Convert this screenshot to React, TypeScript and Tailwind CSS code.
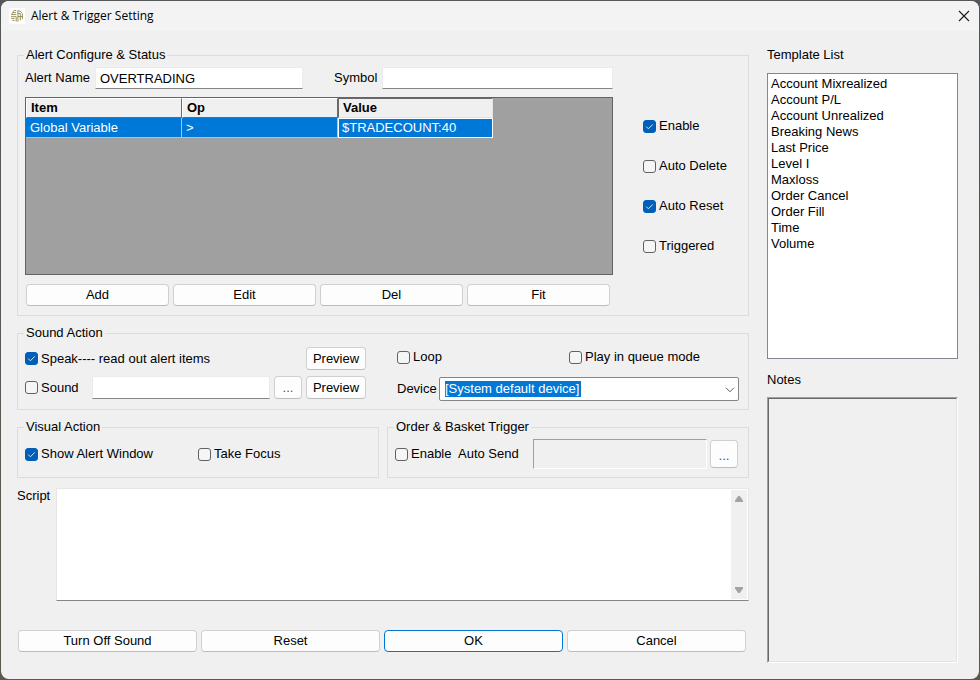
import { useState } from 'react';
import type { ReactNode } from 'react';
import clsx from 'clsx';

type AlertRow = { item: string; op: string; value: string };

const TEMPLATES = [
  'Account Mixrealized',
  'Account P/L',
  'Account Unrealized',
  'Breaking News',
  'Last Price',
  'Level I',
  'Maxloss',
  'Order Cancel',
  'Order Fill',
  'Time',
  'Volume'
];

const ROWS: AlertRow[] = [{ item: 'Global Variable', op: '>', value: '$TRADECOUNT:40' }];

const FIELD_CLASS = 'min-w-0 border border-[#ebebeb] border-b-[#868686] bg-white px-1 outline-none';

export default function App() {
  const [alertName, setAlertName] = useState('OVERTRADING');
  const [symbol, setSymbol] = useState('');

  return (
    <div className="flex min-h-screen bg-linear-to-b from-[#55565a] to-[#5a5a4c] p-px font-['Liberation_Sans',Arial,sans-serif] text-[13px] leading-4 text-black">
      <div className="flex flex-1 flex-col overflow-hidden rounded-lg bg-[#f0f0f0]">
        <TitleBar />

        <div className="flex flex-1 gap-[18px] pt-4 pr-[21px] pb-4 pl-4">
          <main className="min-w-0 flex-1">
            <GroupBox title="Alert Configure & Status" className="flex pb-[9px]">
              <div className="min-w-0 flex-1 pt-1">
                <div className="flex h-[22px] items-center">
                  <label htmlFor="alert-name" className="w-[70px]">
                    Alert Name
                  </label>
                  <input
                    id="alert-name"
                    value={alertName}
                    onChange={(event) => setAlertName(event.target.value)}
                    className={clsx(FIELD_CLASS, 'h-[22px] w-52')}
                  />
                  <label htmlFor="symbol" className="ml-[31px] w-12">
                    Symbol
                  </label>
                  <input
                    id="symbol"
                    value={symbol}
                    onChange={(event) => setSymbol(event.target.value)}
                    className={clsx(FIELD_CLASS, 'h-[22px] flex-1')}
                  />
                </div>

                <AlertGrid rows={ROWS} />

                <div className="mt-[9px] flex gap-1 pr-[3px] pl-px">
                  <PushButton className="h-[22px] flex-1">Add</PushButton>
                  <PushButton className="h-[22px] flex-1">Edit</PushButton>
                  <PushButton className="h-[22px] flex-1">Del</PushButton>
                  <PushButton className="h-[22px] flex-1">Fit</PushButton>
                </div>
              </div>

              <div className="flex w-[135px] flex-col gap-6 pt-[55px] pl-[30px]">
                <CheckBox label="Enable" defaultChecked />
                <CheckBox label="Auto Delete" />
                <CheckBox label="Auto Reset" defaultChecked />
                <CheckBox label="Triggered" />
              </div>
            </GroupBox>

            <GroupBox title="Sound Action" className="mt-[9px] flex pt-1.5 pr-[9px] pb-2">
              <div className="flex w-[372px] flex-col gap-1.5 pr-[31px]">
                <div className="flex h-[23px] items-center justify-between">
                  <CheckBox label="Speak---- read out alert items" defaultChecked />
                  <PushButton className="h-[23px] w-[60px]">Preview</PushButton>
                </div>
                <div className="flex h-[23px] items-center gap-1">
                  <CheckBox label="Sound" className="w-[63px]" />
                  <input aria-label="Sound file" className={clsx(FIELD_CLASS, 'h-[23px] flex-1')} />
                  <PushButton className="h-[23px] w-7 text-[#3a5f80]">...</PushButton>
                  <PushButton className="h-[23px] w-[60px]">Preview</PushButton>
                </div>
              </div>

              <div className="flex flex-1 flex-col gap-2.5">
                <div className="flex h-5 items-center">
                  <CheckBox label="Loop" className="w-[172px]" />
                  <CheckBox label="Play in queue mode" />
                </div>
                <div className="flex items-center">
                  <label htmlFor="device" className="w-[42px]">
                    Device
                  </label>
                  <div className="relative flex-1">
                    {/* the current entry is painted as selected text */}
                    <select
                      id="device"
                      className="block h-6 w-full appearance-none rounded-xs border border-[#868686] bg-white bg-[linear-gradient(#0078d7,#0078d7)] bg-[length:136px_16px] bg-[position:5px_3px] bg-no-repeat px-[5px] pb-px text-white outline-none"
                    >
                      <option>[System default device]</option>
                    </select>
                    <svg
                      viewBox="0 0 10 6"
                      className="pointer-events-none absolute top-2.5 right-1 h-1.5 w-2.5"
                      fill="none"
                      stroke="#5f5f5f"
                    >
                      <path d="M1 .8 5 4.8 9 .8" />
                    </svg>
                  </div>
                </div>
              </div>
            </GroupBox>

            <div className="mt-[9px] grid grid-cols-2 gap-2">
              <GroupBox title="Visual Action" className="pt-1 pb-2">
                <div className="flex h-[30px] items-center">
                  <CheckBox label="Show Alert Window" className="w-[173px]" defaultChecked />
                  <CheckBox label="Take Focus" />
                </div>
              </GroupBox>

              <GroupBox title="Order & Basket Trigger" className="pt-1 pr-2.5 pb-2">
                <div className="flex h-[30px] items-center">
                  <CheckBox label="Enable  Auto Send" className="w-[138px]" />
                  <input
                    aria-label="Order or basket"
                    readOnly
                    className="h-[30px] min-w-0 flex-1 border border-t-[#a0a0a0] border-r-white border-b-white border-l-[#a0a0a0] px-1 outline-none"
                  />
                  <PushButton className="ml-[3px] h-7 w-7 pt-1 text-[#0067b8]">...</PushButton>
                </div>
              </GroupBox>
            </div>

            <div className="mt-2.5 flex">
              <label htmlFor="script" className="w-[39px]">
                Script
              </label>
              <div className="flex h-[113px] flex-1 border border-[#e6e6e6] border-b-[#868686] bg-white pr-px">
                <textarea id="script" className="min-w-0 flex-1 resize-none px-1 outline-none" />
                <div className="my-px flex w-4 flex-col items-center justify-between bg-[#f0f0f0] py-1.5">
                  <svg viewBox="0 0 8 6" className="h-1.5 w-2" fill="#a3a3a3">
                    <path d="M3.2 0h1.6L8 4.6V6H0V4.6z" />
                  </svg>
                  <svg viewBox="0 0 8 6" className="h-1.5 w-2" fill="#a3a3a3">
                    <path d="M0 0h8v1.4L4.8 6H3.2L0 1.4z" />
                  </svg>
                </div>
              </div>
            </div>

            <div className="mt-[29px] flex gap-1 pr-[3px] pl-px">
              <PushButton className="h-[22px] flex-1">Turn Off Sound</PushButton>
              <PushButton className="h-[22px] flex-1">Reset</PushButton>
              <PushButton className="h-[22px] flex-1" primary>
                OK
              </PushButton>
              <PushButton className="h-[22px] flex-1">Cancel</PushButton>
            </div>
          </main>

          <aside className="flex w-[191px] flex-col">
            <label htmlFor="templates">Template List</label>
            <select
              id="templates"
              size={11}
              className="mt-2.5 h-[286px] overflow-hidden border border-[#828790] bg-white px-[3px] py-0.5 outline-none"
            >
              {TEMPLATES.map((template) => (
                <option key={template} className="h-4 p-0">
                  {template}
                </option>
              ))}
            </select>

            <label htmlFor="notes" className="mt-[13px]">
              Notes
            </label>
            <div className="mt-[9px] flex flex-1 border border-t-[#a0a0a0] border-r-white border-b-white border-l-[#a0a0a0]">
              <textarea
                id="notes"
                readOnly
                className="min-w-0 flex-1 resize-none border border-t-[#696969] border-r-[#e3e3e3] border-b-[#e3e3e3] border-l-[#696969] px-1 outline-none"
              />
            </div>
          </aside>
        </div>
      </div>
    </div>
  );
}

function TitleBar() {
  return (
    <header className="flex h-[30px] items-center bg-[#f3f3f3] pr-[9px] pl-2">
      <svg viewBox="0 0 16 16" className="h-4 w-4" fill="none" stroke="#9a9158">
        <rect width="16" height="16" fill="#fff" stroke="none" />
        <path d="M7.2 2.5H5.3L3.3 4.2M7.2 4.6H4L2.3 6.6h4.9M2 8.7h5.2v4.8M2.3 10.6h3.2M3.6 12.5h2" />
        <path d="M8.9 2.3v11.4M8.9 3h2.2l1.9 1.8M8.9 5.5h2.4v7M13.4 5.4v5.8M8.9 8.5h5.2" />
      </svg>
      <h1 className="ml-[6px] flex-1 font-['Open_Sans','Segoe_UI',sans-serif] text-xs">Alert &amp; Trigger Setting</h1>
      <button type="button" aria-label="Close" className="flex h-4 w-3 items-center justify-center">
        <svg viewBox="0 0 12 12" className="h-3 w-3" fill="none" stroke="#1a1a1a" strokeWidth="1.1">
          <path d="m1 1 10 10M11 1 1 11" />
        </svg>
      </button>
    </header>
  );
}

function GroupBox({ title, className, children }: { title: string; className?: string; children: ReactNode }) {
  return (
    <fieldset className={clsx('min-w-0 border border-[#dcdcdc] pl-[7px]', className)}>
      <legend className="-ml-px px-0.5">{title}</legend>
      {children}
    </fieldset>
  );
}

function AlertGrid({ rows }: { rows: AlertRow[] }) {
  return (
    <div className="mt-2 h-[178px] border border-[#646464] bg-[#a0a0a0]">
      <table className="w-[467px] table-fixed border-separate border-spacing-0 text-left">
        <colgroup>
          <col className="w-[156px]" />
          <col className="w-[156px]" />
          <col />
        </colgroup>
        <thead>
          <tr className="h-5 bg-[#f0f0f0]">
            <th className="border border-t-white border-r-[#696969] border-b-[#696969] border-l-white p-0 pl-1">Item</th>
            <th className="border border-t-white border-r-[#696969] border-b-[#696969] border-l-white p-0 pl-1">Op</th>
            <th className="border border-t-[#696969] border-r-[#e3e3e3] border-b-[#e3e3e3] border-l-[#696969] p-0 pl-1">
              Value
            </th>
          </tr>
        </thead>
        <tbody>
          {rows.map((row) => (
            <tr key={row.item} className="h-5 bg-[#0078d7] text-white">
              <td className="border-r border-b border-[#a9c4dc] p-0 pl-1">{row.item}</td>
              <td className="border-r border-b border-[#a9c4dc] p-0 pl-1">{row.op}</td>
              <td className="border border-white p-0 pl-[3px]">{row.value}</td>
            </tr>
          ))}
        </tbody>
      </table>
    </div>
  );
}

function CheckBox({
  label,
  className,
  defaultChecked
}: {
  label: string;
  className?: string;
  defaultChecked?: boolean;
}) {
  return (
    <label className={clsx('flex items-center gap-[3px] whitespace-pre', className)}>
      <span className="relative h-[13px] w-[13px]">
        <input
          type="checkbox"
          defaultChecked={defaultChecked}
          className="peer block h-[13px] w-[13px] appearance-none rounded-[3px] border border-[#626262] bg-[#f5f5f5] checked:border-[#005fb8] checked:bg-[#005fb8]"
        />
        <svg
          viewBox="0 0 13 13"
          className="pointer-events-none absolute inset-0 hidden h-[13px] w-[13px] peer-checked:block"
          fill="none"
          stroke="#d6e6f5"
        >
          <path d="m3.2 6.6 2.2 2.2 4.4-4.4" />
        </svg>
      </span>
      {label}
    </label>
  );
}

function PushButton({ className, primary, children }: { className?: string; primary?: boolean; children: ReactNode }) {
  return (
    <button
      type="button"
      className={clsx(
        'rounded border bg-[#fdfdfd]',
        primary ? 'border-[#0078d4]' : 'border-[#d0d0d0] border-b-[#bcbcbc]',
        className
      )}
    >
      {children}
    </button>
  );
}
